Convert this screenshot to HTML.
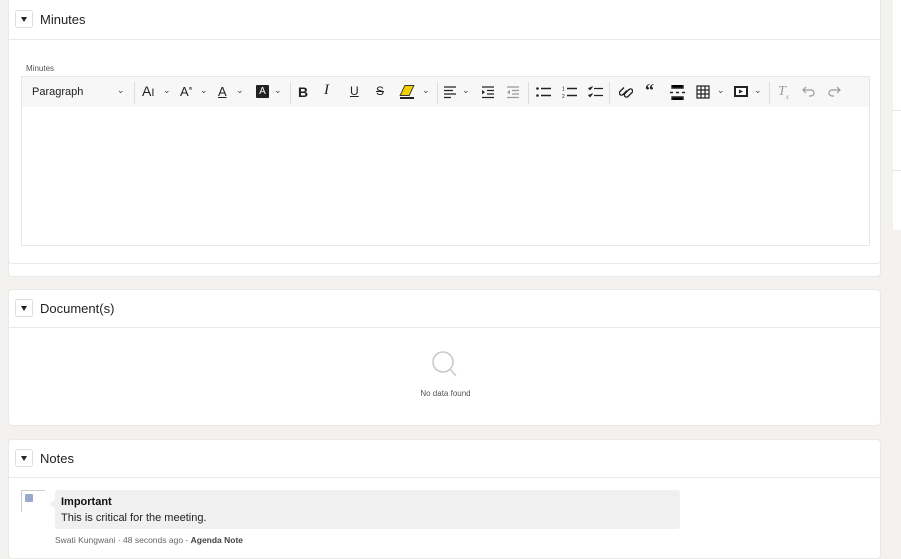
<!DOCTYPE html>
<html><head><style>
*{box-sizing:border-box;margin:0;padding:0}
body{width:901px;height:547px;overflow:hidden;background:#f3f2f0;font-family:"Liberation Sans",sans-serif;position:relative;color:#333}
.card{position:absolute;left:8px;width:873px;background:#fff;border:1px solid #ebe9e6;border-radius:4px}
.hdr{height:38px;border-bottom:1px solid #ebe9e6;position:relative}
.tog{position:absolute;left:6px;top:9px;width:18px;height:18px;border:1px solid #ddd;border-radius:3px;background:#fff}
.tog:after{content:"";position:absolute;left:5px;top:6px;border-left:3.5px solid transparent;border-right:3.5px solid transparent;border-top:5px solid #222}
.ttl{position:absolute;left:31px;top:11px;font-size:13px;color:#222}
.tb{position:absolute;left:12px;top:66px;width:849px;height:32px;background:#f7f7f7;border:1px solid #e6e6e6;font-size:13px;color:#222}
.ed{position:absolute;left:12px;top:97px;width:849px;height:139px;border:1px solid #e6e6e6;border-top:none;background:#fff}
.i{position:absolute;top:7px;font-size:13px}
.sep{position:absolute;top:5px;width:1px;height:22px;background:#ddd}
.ch{position:absolute;top:8px;font-size:9px;color:#444}
svg.s{position:absolute;top:8px}
</style></head><body>
<div style="position:absolute;left:893px;top:0;width:8px;height:230px;background:#fff"></div>
<div style="position:absolute;left:893px;top:110px;width:8px;height:1px;background:#e6e6e6"></div>
<div style="position:absolute;left:893px;top:170px;width:8px;height:1px;background:#e6e6e6"></div>

<div class="card" style="top:-4px;height:281px;background:#fff"></div>
<div class="card" style="top:-4px;height:268px">
 <div class="hdr" style="height:43px"><div class="tog" style="top:13px"></div><div class="ttl" style="top:15px">Minutes</div></div>
 <div style="position:absolute;left:17px;top:67px;font-size:8px;color:#555">Minutes</div>
 <div class="tb" style="top:79px">
  <span class="i" style="left:10px;font-size:11px;top:9px">Paragraph</span>
  <span class="ch" style="left:95px">&#8964;</span>
  <div class="sep" style="left:112px"></div>
  <span class="i" style="left:120px;font-size:14px;top:6px">A<span style="font-size:11px">I</span></span><span class="ch" style="left:141px">&#8964;</span>
  <span class="i" style="left:158px;font-size:13px">A<sup style="font-size:6px">≡</sup></span><span class="ch" style="left:178px">&#8964;</span>
  <span class="i" style="left:196px;text-decoration:underline">A</span><span class="ch" style="left:214px">&#8964;</span>
  <span style="position:absolute;left:234px;top:8px;width:13px;height:13px;background:#222;color:#fff;font-size:10px;text-align:center;line-height:13px;border-radius:1px">A</span><span class="ch" style="left:252px">&#8964;</span>
  <div class="sep" style="left:268px"></div>
  <span class="i" style="left:276px;font-weight:bold;font-size:14px">B</span>
  <span class="i" style="left:302px;font-style:italic;font-family:'Liberation Serif';font-size:15px;top:5px">I</span>
  <span class="i" style="left:328px;text-decoration:underline;font-size:12px">U</span>
  <span class="i" style="left:354px;text-decoration:line-through;font-size:12px">S</span>
  <span style="position:absolute;left:380px;top:8px;width:10px;height:11px;background:#f0d000;transform:skewX(-25deg);border:1px solid #333"></span><span style="position:absolute;left:378px;top:20px;width:14px;height:1.5px;background:#222"></span><span class="ch" style="left:400px">&#8964;</span>
  <div class="sep" style="left:415px"></div>
  <svg class="s" style="left:421px" width="14" height="14" stroke="#222" stroke-width="1.3"><path d="M1 2h12M1 5.5h9M1 9h12M1 12.5h7"/></svg><span class="ch" style="left:440px">&#8964;</span>
  <svg class="s" style="left:459px" width="14" height="14" stroke="#222" stroke-width="1.3"><path d="M1 2h12M6 5.5h7M6 9h7M1 12.5h12"/><path d="M1 5l3 2.2-3 2.2z" fill="#222" stroke="none"/></svg>
  <svg class="s" style="left:484px" width="14" height="14" stroke="#999" stroke-width="1.3"><path d="M1 2h12M6 5.5h7M6 9h7M1 12.5h12"/><path d="M4 5l-3 2.2 3 2.2z" fill="#999" stroke="none"/></svg>
  <div class="sep" style="left:506px"></div>
  <svg class="s" style="left:514px" width="15" height="14" stroke="#222" stroke-width="1.4"><path d="M5 3.5h10M5 10.5h10"/><circle cx="1.5" cy="3.5" r="1.3" fill="#222" stroke="none"/><circle cx="1.5" cy="10.5" r="1.3" fill="#222" stroke="none"/></svg>
  <svg class="s" style="left:540px" width="15" height="14" stroke="#222" stroke-width="1.4"><path d="M5 3.5h10M5 10.5h10"/><text x="0" y="5.5" font-size="5" fill="#222" stroke="none">1</text><text x="0" y="13" font-size="5" fill="#222" stroke="none">2</text></svg>
  <svg class="s" style="left:566px" width="15" height="14" stroke="#222" stroke-width="1.2"><path d="M6 3.5h9M6 10.5h9M0.5 3l1.5 1.5 2.5-3M0.5 10l1.5 1.5 2.5-3"/></svg>
  <div class="sep" style="left:587px"></div>
  <svg class="s" style="left:597px" width="14" height="14" stroke="#222" stroke-width="1.3" fill="none"><path d="M6 8.5l4-4a2 2 0 0 1 3 3l-4 4a2 2 0 0 1-3-3M8 5.5l-4 4a2 2 0 0 1-3-3l4-4"/></svg>
  <span class="i" style="left:623px;font-weight:bold;font-size:18px;top:3px;font-family:'Liberation Serif'">“</span>
  <svg class="s" style="left:648px" width="15" height="15" stroke="#222" stroke-width="1.4"><path d="M2 0v3h11V0M2 15v-3h11v3M0 7.5h3M6 7.5h3M12 7.5h3"/></svg>
  <svg class="s" style="left:674px" width="14" height="14" stroke="#222" stroke-width="1.2" fill="none"><rect x="1" y="1" width="12" height="12"/><path d="M1 5h12M1 9h12M5 1v12M9 1v12"/></svg><span class="ch" style="left:695px">&#8964;</span>
  <svg class="s" style="left:712px" width="14" height="13" fill="#222"><rect x="0" y="1" width="14" height="11"/><rect x="2" y="3" width="10" height="7" fill="#fff"/><path d="M5 4.5v4l4-2z"/></svg><span class="ch" style="left:732px">&#8964;</span>
  <div class="sep" style="left:747px"></div>
  <span class="i" style="left:756px;font-style:italic;color:#999;font-family:'Liberation Serif';font-size:14px">T<sub style="font-size:7px">x</sub></span>
  <svg class="s" style="left:780px" width="14" height="12" stroke="#999" stroke-width="1.2" fill="none"><path d="M4 2L1 5l3 3M1 5h8a3 3 0 0 1 0 6H7"/></svg>
  <svg class="s" style="left:805px" width="14" height="12" stroke="#999" stroke-width="1.2" fill="none"><path d="M10 2l3 3-3 3M13 5H5a3 3 0 0 0 0 6h2"/></svg>
 </div>
 <div class="ed" style="top:110px"></div>
</div>

<div class="card" style="top:289px;height:137px">
 <div class="hdr"><div class="tog"></div><div class="ttl">Document(s)</div></div>
 <svg style="position:absolute;left:422px;top:60px" width="28" height="30" viewBox="0 0 28 30"><circle cx="12" cy="12" r="10" fill="none" stroke="#c8c8c8" stroke-width="1.5"/><line x1="19" y1="19" x2="25" y2="26" stroke="#c8c8c8" stroke-width="1.5"/></svg>
 <div style="position:absolute;left:0;width:873px;top:99px;text-align:center;font-size:8px;color:#555">No data found</div>
</div>

<div class="card" style="top:439px;height:120px">
 <div class="hdr"><div class="tog"></div><div class="ttl">Notes</div></div>
 <div style="position:absolute;left:12px;top:50px;width:24px;height:22px;border-left:1px solid #ccc;border-top:1px solid #ccc"><div style="position:absolute;left:3px;top:3px;width:8px;height:8px;background:#9ac;border-radius:1px"></div></div>
 <div style="position:absolute;left:46px;top:50px;width:625px;height:39px;background:#f0f0f0;border-radius:3px"></div>
 <div style="position:absolute;left:41px;top:59px;border-top:5px solid transparent;border-bottom:5px solid transparent;border-right:5px solid #f0f0f0"></div>
 <div style="position:absolute;left:52px;top:56px;font-size:11px;font-weight:bold;color:#111">Important</div>
 <div style="position:absolute;left:52px;top:72px;font-size:11px;color:#222">This is critical for the meeting.</div>
 <div style="position:absolute;left:46px;top:95px;font-size:8.5px;color:#666">Swati Kungwani · 48 seconds ago - <b style="color:#444">Agenda Note</b></div>
</div>
</body></html>
